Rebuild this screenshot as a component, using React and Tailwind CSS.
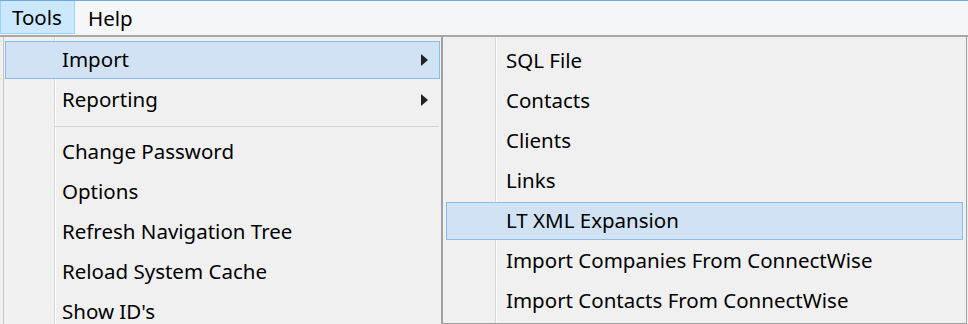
import React from "react";

const font = { fontFamily: '"Noto Sans", "Open Sans", sans-serif' };

function Arrow() {
  return (
    <svg width="8" height="12" viewBox="0 0 8 12" className="block">
      <polygon points="0,0 7,6 0,12" fill="#222" />
    </svg>
  );
}

function Row({ label, active, arrow, sub }) {
  const base = "h-[38px] my-[1px] mx-[1px] flex items-center pb-[2px] pr-[10px] border";
  const pad = sub ? " pl-[59px]" : " pl-[56px]";
  const state = active ? " bg-[#d0e2f4] border-[#87bcec]" : " border-transparent";
  return (
    <div className={base + pad + state}>
      <span className="text-[20.5px] text-black leading-none whitespace-nowrap">{label}</span>
      {arrow && (
        <span className="ml-auto pt-[2px]">
          <Arrow />
        </span>
      )}
    </div>
  );
}

export default function App() {
  return (
    <div className="w-[968px] h-[324px] overflow-hidden bg-[#f0f0f0] flex flex-col" style={font}>
      <div className="h-[37px] shrink-0 bg-[#f5f6f7] border-t border-[#6fa8df] border-b-2 border-b-[#a8a8a8] flex items-stretch">
        <div className="w-[75px] mb-[1px] bg-[#cce8ff] border border-t-0 border-[#99d1ff] flex items-center pl-[11px] text-[20.5px] text-black">
          Tools
        </div>
        <div className="flex items-center pl-[13px] text-[20.5px] text-black">Help</div>
      </div>
      <div className="flex flex-1 min-h-0 pl-[3px]">
        <div className="w-[440px] h-[320px] shrink-0 flex flex-col pt-[3px] border-l border-[#c8c8c8] border-r-2 border-r-[#a0a0a0] bg-[#f0f0f0] bg-[linear-gradient(to_right,transparent_50px,#d7d7d7_50px,#d7d7d7_51px,#ffffff_51px,#ffffff_52px,transparent_52px)]">
          <Row label="Import" active arrow />
          <Row label="Reporting" arrow />
          <div className="h-[12px] flex items-center pl-[51px] pr-[2px]">
            <div className="flex-1 h-[1px] bg-[#d2d2d2]" />
          </div>
          <Row label="Change Password" />
          <Row label="Options" />
          <Row label="Refresh Navigation Tree" />
          <Row label="Reload System Cache" />
          <Row label="Show ID's" />
        </div>
        <div className="w-[524px] h-[287px] shrink-0 flex flex-col pt-[4px] px-[2px] border-r border-b border-[#a0a0a0] bg-[#f0f0f0] bg-[linear-gradient(to_right,transparent_52px,#d7d7d7_52px,#d7d7d7_53px,#ffffff_53px,#ffffff_54px,transparent_54px)]">
          <Row sub label="SQL File" />
          <Row sub label="Contacts" />
          <Row sub label="Clients" />
          <Row sub label="Links" />
          <Row sub label="LT XML Expansion" active />
          <Row sub label="Import Companies From ConnectWise" />
          <Row sub label="Import Contacts From ConnectWise" />
        </div>
      </div>
    </div>
  );
}
